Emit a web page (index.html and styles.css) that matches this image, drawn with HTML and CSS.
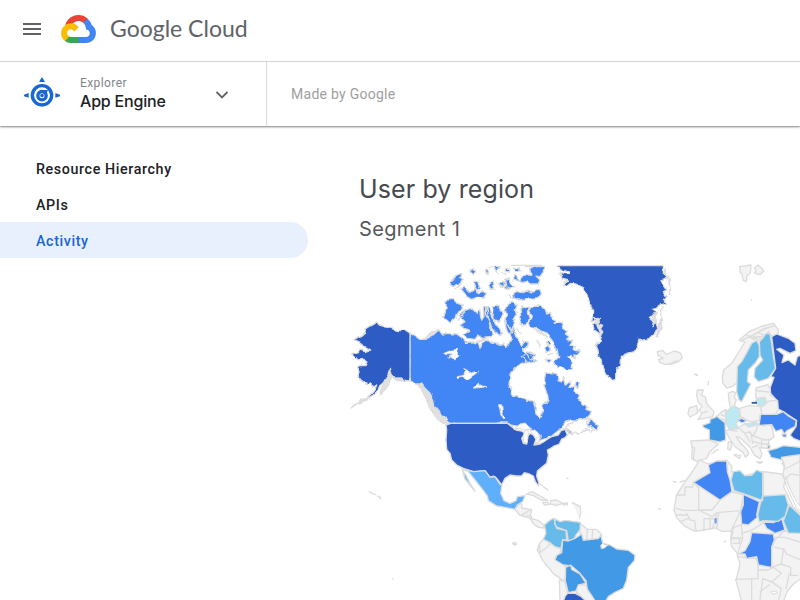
FILE: index.html
```html
<!DOCTYPE html>
<html lang="en">
<head>
<meta charset="utf-8">
<title>Google Cloud</title>
<link rel="stylesheet" href="styles.css">
</head>
<body>
<header class="topbar">
  <svg class="menu" viewBox="0 0 18 12"><path d="M0 1h18M0 6h18M0 11h18"/></svg>
  <svg class="logo" viewBox="0 0 256 206">
    <path fill="#ea4335" d="M170.252 56.819l22.253-22.253 1.483-9.37C153.437-11.677 88.976-7.496 52.42 33.92 42.267 45.423 34.734 59.764 30.717 74.573l7.97-1.123 44.505-7.34 3.436-3.513c19.797-21.742 53.27-24.667 76.128-6.168l7.496.39z"/>
    <path fill="#4285f4" d="M224.205 73.918a100.249 100.249 0 0 0-30.217-48.722l-31.232 31.232a55.515 55.515 0 0 1 20.379 44.037v5.544c15.35 0 27.797 12.445 27.797 27.796 0 15.352-12.446 27.485-27.797 27.485h-55.671l-5.466 5.934v33.34l5.466 5.231h55.67c39.93.311 72.553-31.494 72.864-71.424a72.303 72.303 0 0 0-31.793-60.453"/>
    <path fill="#34a853" d="M71.87 205.796h55.593V161.29H71.87a27.275 27.275 0 0 1-11.4-2.498l-7.887 2.42-22.409 22.253-1.952 7.574c12.567 9.489 27.9 14.825 43.647 14.757"/>
    <path fill="#fbbc05" d="M71.87 61.425C31.94 61.664-.237 94.228.002 134.158a72.301 72.301 0 0 0 28.222 56.88l32.248-32.246c-13.99-6.322-20.208-22.786-13.887-36.776 6.32-13.99 22.786-20.208 36.775-13.888a27.796 27.796 0 0 1 13.887 13.888l32.248-32.248A72.224 72.224 0 0 0 71.87 61.425"/>
  </svg>
  <span class="brand">Google Cloud</span>
</header>
<div class="subbar">
  <div class="product">
    <svg class="engine" viewBox="0 0 108 90">
      <circle cx="54" cy="55" r="29" class="ring"/>
      <circle cx="54" cy="56" r="12.500" class="ring inner"/>
      <path d="M56 39h16l-4 9-9 4zM54 50a5.500 5.500 0 1 0 0 11 5.500 5.500 0 0 0 0-11zM46 13l8-13 8 13v2H46zM14 48v14L0 58v-5zM94 48v14l14-4v-5z"/>
    </svg>
    <div class="names"><span class="kind">Explorer</span><span class="name">App Engine</span></div>
    <svg class="chevron" viewBox="0 0 12 8"><path d="M.5 1L6 6.500 11.500 1"/></svg>
  </div>
  <span class="made">Made by Google</span>
</div>
<div class="body">
  <nav class="side">
    <a>Resource Hierarchy</a>
    <a>APIs</a>
    <a class="active">Activity</a>
  </nav>
  <main class="main">
    <h1>User by region</h1>
    <h2>Segment 1</h2>
    <svg class="map" viewBox="0 0 1380 1020">
      <defs>
        <filter id="jagged" filterUnits="userSpaceOnUse" x="0" y="0" width="1050" height="600" color-interpolation-filters="sRGB">
          <feTurbulence type="fractalNoise" baseFrequency="0.055" numOctaves="1" seed="4"/>
          <feDisplacementMap in="SourceGraphic" scale="15" xChannelSelector="R" yChannelSelector="G"/>
        </filter>
        <clipPath id="north"><path d="M0 17h1380v1003H0z"/></clipPath>
      </defs>
      <g clip-path="url(#north)">
      <g filter="url(#jagged)">
        <!-- Alaska and its islands -->
        <path class="coast" d="M228 366L245 370 262 382 280 402 290 430 308 458 334 484 332 500 322 500 292 476 286 462 268 446 262 422 248 396zM152 325l4 28-10 18-8 18-20 18 8-25zM34 444l18-18 24-12 14-4-12 12-24 8zM162 350l12-8 14 16 22 4-20 2-24-6z"/>
        <path class="c1" d="M110 186l8 9 14 4 13 4 20 6 15 3 15-2 14 8v144h-12l-12-2-10-10-7-3-8 8-4-10-4-20-5 15-9 15-8 13-8 7-7 15-15 15-12 7-8 2 15-14 10-12 5-13-12 3-10-8-8 7-4-12-8 1-8-11-6-5 4-20-6-8 8-6 18 1 6-11-12-8-17 2-17-16 17-6 5-8 15 5 17-5-12-8-10-2-8-12-16-8 6-8 14-6 12-11-3-8 15-9z"/>
        <!-- Canada -->
        <path class="c2" d="M211 220L225 228 240 238 252 240 262 230 280 222 297 210 305 222 320 220 350 222 365 232 372 246 400 246 415 248 420 265 426 248 440 240 450 248 470 252 490 252 500 262 508 250 515 235 508 218 496 195 498 180 515 185 520 210 530 225 535 240 545 262 552 240 565 250 562 262 548 270 560 276 584 284 578 296 590 306 570 308 545 310 525 325 510 345 507 375 513 390 520 405 540 410 560 420 578 423 585 440 588 465 598 475 605 465 608 440 620 425 625 415 617 390 612 375 615 350 617 338 640 342 652 345 654 362 664 366 668 350 676 376 690 364 688 384 700 378 702 396 716 404 712 414 728 424 726 434 742 440 738 448 754 454 750 464 740 475 720 480 690 480 675 488 665 500 655 512 635 528 615 538 587 552 600 540 600 525 585 518 570 508 560 495 535 500 515 495 502 489 330 489 300 460 285 440 280 420 270 400 255 385 245 372 225 372 211 362z"/>
        <path class="c2" d="M738 496L748 488 752 474 762 486 772 494 768 508 754 500zM682 498L694 494 702 508 698 520 686 524z"/>
        <path class="c2" d="M318 120l22-2 10 10 20 7-5 15-15 10-5 15-15 15-10-10-10-5 8-25zM355 165l25-15 15-5 15 15 8-10 7 30 7-10-2-30 10 0 5 30 5 30 10 20-10 12-20 3-15-10-10 13-25-3-10-10 20-15-20-5-10-10 15-10zM438 140l10-1 2 18 12 26 14 20 12 16-8 8-14-12-12-14-8-20-10-20z"/>
        <path class="c2" d="M461 140l12-2 6 14 12 3-6 18-8 12-12-6-8-18zM500 132l14-4 18 6-6 16 4 18-10 18-6 20 4 12-14 2-6-16-4-22 6-16-4-16z"/>
        <path class="c2" d="M540 150L550 138 568 142 562 158 568 176 560 194 548 200 538 188 542 168z"/>
        <path class="c2" d="M572 140L602 138 614 148 620 162 632 158 634 174 648 180 646 190 668 190 664 202 682 214 676 222 688 230 680 238 698 244 690 256 706 260 702 270 718 274 712 284 704 282 706 296 692 286 684 290 698 308 696 330 678 328 660 318 650 324 642 304 656 292 652 272 646 254 632 236 618 218 600 212 588 206 574 204 568 186 576 172 566 156z"/>
        <path class="c2" d="M544 288l14-8 14 16 12 4-10 8-16-2zM614 264l10-4 8 10-12 8zM620 246l8-3 3 12-8 4zM614 300l8-6 10 4-8 8zM708 366l10 2-4 14-8-2z"/>
        <path class="c2" d="M330 74l10-18 12-12 14-4-4 14 8 4-8 12-14 4-8 6zM389 32l14-6 4 10-10 8zM362 86l12-4 12 14 14-4 10-8 4 14 12-4 14 6-10 14-16-2-20 6-14-8-6-10zM404 62l10 8 8 18-10 2-8-14zM436 30l6-3 4 14-6 1zM446 72l14-6 4 18-12 4zM468 18l10 2-4 10-8-4zM480 68l10-4 4 10-10 6zM494 58l14-4 3 16 12 8-12 10-14-6zM496 22l14 4-2 10-12-2zM520 46l14 6 2 10-14-4zM524 24l16-2 2 10-14 2zM544 52l14-8 18-4-8-12 10-8h34l-2 16-10 14-12-2 12 12-6 12-20 0-14-6-10 4-12-8zM530 94l14 4 16-8 20 6 20-8 4 14-10 14-20 2-20-2-18 4-14-6-2-14z"/>
        <path class="coast" d="M446 22h16M552 20h38M466 24l6 20M486 38l12 8M450 78l16 14M470 66l22 14M504 102l16 14M346 86l16-12M352 180l24-26M376 250l38-2 22-12M446 244l30 6M250 236l24-20 20-6-20 20-22 8M530 205l12 16M500 190l14 24M580 210l20 4 20 18M590 240l12 20M626 284l12-4"/>
        <path class="lake" d="M312 280l24-10 20-2-4 12 8 4-16 16-10-2-8-6 10-8-16 0zM352 351l18-5 6-14-8-6 18 6 2 10 14-6 14-2-6 8-14 6-14 10-10-1-4-6-14 5zM400 384l16-15 6 9 18 1-20 4zM477 434l8 0 2 20 9 20-5 3-8-14-6-20z"/>
        <!-- Greenland -->
        <path class="c1" d="M648 10h322l0 30 13 10-10 10-10 2 17 28-10 5 11 15-8 10 3 10-18 5-5 10-20 3 15 10-5 12-15 5 20 10 10 20-10 10-20 20-25 7-7-4-3 17-10 20-20 5-15 12-7 8-1 20-10 10 0 25-7 7-10-12-15-5-10-20-5-25-7-10-3-25-7-15 14-5 5-20-22-15-5-15 20-10-5-7-17 7 2-35-12-30-10-30-28-18-15-2-20 8 0-13 15-5-20-5-10-17 30 4 0-7-30-5z"/>
        <path class="coast" d="M760 172l18 6-6 12 16 6-8 12 8 10-4 12M976 26l-2 20 14 12 4 48M966 142l-4 20 4 44-18 22M942 160l8 20-14 20"/>
        <path class="edge" d="M669 520L683 496 700 484 734 478 752 474 740 488 744 500 766 508 758 514 738 506 712 524 704 516 692 524 686 504 668 504z"/>
      </g>
      </g>
      <!-- straight borders -->
      <path class="c2 patch" d="M211 240h50v114h-50zM345 462h125v28H345z"/>
      <path class="c1 patch" d="M165 222h45v130h-45z"/>
      <path class="line" d="M210 220v142M330 490h172M656 17h312"/>
      <path class="coast" d="M514 16h90"/>
      <path class="land" d="M952 275l15-4 12 12 24-10 18 6 6 14-12 12-23 9-16-6-16 0-4-9 14-5-16-8z"/>
      <path class="land" d="M1199 20l34-5-2 24-11 9-1 17-9-4-4-18-6-8zM1244 24l10-9 12 10 5 9-12 10-15-5 4-7z"/>
      <!-- United States and Mexico -->
      <path class="c1" d="M332 490H502l13 10 13 10 17 3 10 7-10 15 5 15 10 2 2-22 8-10 10 5 8 13-6 17 18-3 18-12 17-10 20-5 8-13 12-4 7 17-7 8-10 4-7 15-16 6-10 7-10 5 3 15-5 25-15 12-13 11-2 15 7 22-2 7-9-12-6-17-12-6-15-4-8 10-15 0-20-3-15 10-10 20-15-20-10-7-10 4-15-20-20 3-15 0-30-10-20-10-15-15-5-20-10-12-2-28 2-30-2-15z"/>
      <path class="lake" d="M522 508l18-16 16-3 8 10 10 8-20 3-16-5zM555 512l10-2-1 22-3 18-10-3 0-20zM572 512l12-2 10 8 5 12-12 4-6-8zM587 550l22-12 18-5-14 12-18 6z"/>
      <path class="c4" d="M367 627l33 8 20-2 15-1 15 20 15-2 15 23 6 2-4 25 10 22 18 8 18-8 4-12 23-3-7 18-16 10-7 13-15-3-15-3-25-4-25-16-3-14-17-23-20-25-20-25-7-3zM367 630l11 16 10 20 17 28-10-12-20-25z"/>
      <!-- Central America, Caribbean, South America -->
      <g transform="translate(480 660)">
        <path class="land" d="M45 88l8-10 8-8 5 2-1 12 30 5-4 17 5 10 20 6 17 14-2 8-14-2-14-8-14-20-30-9zM78 42l18-7 24 13 24 14-22-2-22-14zM128 67l15 0 4 6-14 2zM152 62l18-2 19 10-18 6-20-4zM190 70l12-1v5l-12 1zM117 12l10 4M130 20l14 10M217 68l24 12 1 20-4 14M38 190l8-3 3 6-7 2z"/>
        <path class="land" d="M112 210l6-20 14-12 18 10 18 14 15 4-3 16-14 13 25 20 7 7-3 43-35-24-30-37zM118 190l14-12 18 8-4 12-26 20zM178 300l17 4 8 36-10 24h-13zM240 130l22 18 28 0 15 16-10 13-43 4-12-18zM262 150l-2 28M278 150l-2 26M234 314l26 2 4 18 26 12v16h-35l-26-26zM90 90l-22 14M94 110l-12-5"/>
        <path class="c5" d="M133 135l15-13 14-8 3 16 5 15 28 7 2 28-12 0-5 25-18-5-15-12-20-10 8-18zM166 117l14 8 16-4 45 6-1 23-12 15-6 13-17 5-5-31-28-10-8-10z"/>
        <path class="c3" d="M188 180L205 183 225 175 245 162 250 181 275 178 295 176 303 166 308 190 330 195 350 207 385 211 405 226 403 242 385 262 380 300 370 325 345 337 325 350 318 362 285 362 262 327 258 302 240 280 215 258 190 255 165 240 170 226 185 218zM197 262L212 255 215 268 240 282 258 310 235 315 228 333 205 338 196 303z"/>
        <path class="c1" d="M190 363l6-16 8-8 22 1 18 10 14 13z"/>
        <path class="lake" d="M303 195l8-7 2 7 10 0-8 8-10 3z"/>
      </g>
      <!-- Europe -->
      <g transform="translate(960 0)">
        <path class="land" d="M187 350l4-20 24-20 25-40 15-24-18-5 30-26 40-17 34-8 14 20v15l-18 5-12-15-15 20-15 5-20 10-13 30-22 35-6 50-18 15-16 4-12-16z"/>
        <path class="coast" d="M242 242l36-16 34-20 30-8M262 226l18 12 28-10M292 218l20 6"/>
        <path class="c5" d="M290 241l8 17v32l-13 20-20 20-3 35 10 7-14 28-13 25-8-5-7-25 2-75 13-15 17-30 13-25zM308 235l10-15 12 2 5 28 5 40 7 35-22 30-30 10-13-15 3-25 23-25-8-15-2-40z"/>
        <path class="c1" d="M335 230L350 222 385 235 405 250 408 272 390 280 360 265 350 268 372 285 366 308 385 300 405 315 412 290 425 285V545L400 535 390 525 408 500 410 482 385 465 370 455 350 445 345 415 332 400 330 385 342 352 332 350 347 325z"/>
      </g>
      <g transform="translate(960 300)">
        <path class="land" d="M288 84l35-10 8 12 0 18 22 18 2 26-10 17-45 0-2 17-28 3-28-15-5-24 32-10 28 4 8-16-18-12zM205 100l12-6 10 4-4 14 6 8-8 22-10 0-4-20zM112 90l18 0-6 16 12 4 4 20 22 25-4 15-44 9 12-20-10-8 10-12-12-14-4-20zM88 144l22-7 3 22-23 12-6-10zM92 243l56-3 27 12-25 23-10 20-30 9-15-9 2-33zM168 174l14-16 16-10 2 34z"/>
        <path class="land" d="M196 212l38-8 22-14 34 2 30-6 14 10 8 34-16 12 0 24-28-4 8 20-6 14-16-10-14-24-22-22-14-10-6 0 16 22 18 18 4 12-10 10-6-14-24-18-16-22zM222 284l20 2-4 10zM205 246l8-1 2 14-5 12-7-4zM290 306l18 0-8 4zM155 280l10-4M164 272l12-4"/>
        <path class="border" d="M240 206l14 14 14-4 10 12 12-20 4-18M254 220l16 24M272 216l6 34M290 208l-10 20 34 12 20-2M278 244l28 8 22 0M278 262l16-6M305 240v24M290 190l24 8M210 210l20 4M305 162l-2-20 26-20 20 0M290 92l36 4M94 260l10 4-4 36M124 160l18-6M198 170l-14-6M206 150l14-10"/>
        <path class="c3" d="M128 196l22-8 0-10 16-6 3 -4 26 20 2 52-17 6-32-6 0-30-18-8zM322 258l8-2 0 8-8 2zM324 272l26-7 20-8 52 5v29l-37-2-20 11-32-8z"/>
        <path class="c6" d="M197 156l12-10 16-8 14 10 1 28-12 14 8 16-28 2-11-20zM290 116l24-4 5 12-10 14-12 0-10-10zM254 192l16-2 20-5-2 10-22 6z"/>
        <path class="c2" d="M302 163l48 0 20-8 15 13 24 14-4 18-24 12 -8 10-8-14-18 6-12-20-38 2zM232 180l14-5 14 8-14 6zM366 222l14 0-2 10-10-2z"/>
        <path class="tiny" d="M275 126l16-1v6h-16z"/>
        <path class="land" d="M0 6l15 8 12-2L50 2M104 42l6 4M145 64v10M366 310l12-18 42 0v24l-40 18z"/>
      </g>
      <!-- Africa -->
      <g transform="translate(960 570)">
        <path class="land" d="M118 30l27 12 55-12 16 20-2 14 40 14 48-14 64 8 9 20-4 18 28 60 26 24V384l-25 18-18 22-12 30H245l-17-62 12-50-10-34-15-18-3-24 3-22-28 0-22-10-60 10-30-15-25-26-8-24 8-45 25-38 28-40z"/>
        <path class="border" d="M100 97l-2 14H75v24H50M100 97l16 16 0 68H70L48 175M116 180l40 0 24-30M180 150l36-24 34 8-8 48-72 6-14 12-40-20M170 190l-12 46M132 206v36M150 204v34M132 206h38M104 212l4 30M80 190l10 20 14 2M50 195h28M60 215l26-10M176 190l-6 44M240 186l-14 30-14 28M246 224l-24 8-8 32h30M244 224l4 40-14 44M214 266h24v14h-18M245 250l28-8 38-24M310 68l0 70h66M375 240l-30 30-8 20M345 262h30l45 14M345 292l28 6 6 14 40 16M340 350l24-8 28 10 0 24 20 0M232 320l58 6 4 20 0 40-68 2M294 360l30 0 16-8 24 18-28 26-28-10M308 388l-8 60M275 390v60M336 396l28 20-8 34M372 240l16 8M364 340l6-40M388 370l-10 46M300 425l28-20"/>
        <path class="land" d="M364 22l56-8v152l-14-8-14-32-14-44-10-4 6-30z"/>
        <path class="border" d="M374 88l18-16 28 4M370 60l50-26"/>
        <path class="lake" d="M374 95l10 24 14 30 12 26 14 10v-12l-14-18-14-26-12-26z"/>
        <path class="c2" d="M145 45L170 33 200 33 202 65 210 90 216 125 180 150 100 97 150 68zM250 133L298 155 290 195 292 202 265 225 245 222 242 185 250 165zM310 216L340 218 365 206 375 240 345 250 320 235zM275 248L340 252 343 270 335 290 335 352 295 345 290 320 260 325 255 312 235 312 255 302 270 275z"/>
        <path class="c5" d="M220 65L240 62 255 77 275 76 290 60 308 68 308 152 250 131 222 122 213 90zM308 138L375 134 385 165 375 200 365 206 355 214 310 212 298 216 293 195 300 165zM388 165L424 199V250L385 249 370 213z"/>
        <path class="tiny pale" d="M163 206l7-2 0 16-5 1z"/>
        <path class="lake" d="M334 424l16 0 2 6-14 2z"/>
        <path class="coast" d="M40 94l8 2M60 96l14-4M-4 176l6 2M192 276l5-3"/>
      </g>
      <path class="coast" d="M88 696l6 2M94 700l12 4M112 708l10 4-2 4M680 656l4-2M1068 342l4 4M1234 120l1 1M158 956l1 1"/>
    </svg>
  </main>
</div>
</body>
</html>
```
FILE: styles.css
```css
* { box-sizing: border-box; }
html, body { margin: 0; height: 600px; overflow: hidden; background: #fff; }
body { font-family: Roboto, sans-serif; color: #202124; display: flex; flex-direction: column; }
svg { display: block; flex: none; }

.topbar { height: 62px; flex: none; display: flex; align-items: center; padding: 0 0 4px 23px; border-bottom: 1px solid #dadce0; }
.menu { width: 18px; height: 12px; stroke: #5f6368; stroke-width: 1.8; }
.logo { width: 35px; height: 28px; margin-left: 20px; }
.brand { margin: -2px 0 0 14px; font: 400 23px/30px Lato, sans-serif; letter-spacing: 0; color: #5f6368; white-space: nowrap; }

.subbar { height: 64px; flex: none; display: flex; align-items: stretch; box-shadow: 0 1px 2px rgba(0,0,0,.5); }
.product { width: 267px; display: flex; align-items: center; padding-left: 24px; border-right: 1px solid #dadce0; }
.engine { width: 36px; height: 30px; fill: #1967d2; margin-top: -4px; }
.ring { fill: none; stroke: #1967d2; stroke-width: 10; }
.inner { stroke-width: 10; }
.names { display: flex; flex-direction: column; margin: -2px 0 0 20px; width: 136px; }
.kind { font-size: 12px; line-height: 16px; letter-spacing: .4px; color: #80868b; }
.name { font: 500 16px/21px Inter, sans-serif; letter-spacing: -.2px; color: #202124; }
.chevron { width: 12px; height: 8px; fill: none; stroke: #5f6368; stroke-width: 1.9; margin-top: 2px; }
.made { align-self: center; margin: 0 0 0 24px; font-size: 14px; letter-spacing: .27px; color: #9e9e9e; }

.body { flex: 1; display: flex; min-height: 0; }
.side { width: 308px; flex: none; padding-top: 24px; }
.side a { display: flex; align-items: center; height: 36px; padding: 2px 0 0 36px; font-size: 14.300px; font-weight: 500; letter-spacing: .6px; border-radius: 0 18px 18px 0; }
.side .active { background: #e8f0fe; color: #1967d2; }

.main { flex: none; width: 492px; padding: 43px 0 0 32px; overflow: hidden; }
h1, h2 { margin: 0 0 0 19px; font-family: Inter, sans-serif; font-weight: 400; color: #454a4f; }
h1 { font-size: 25px; line-height: 40px; letter-spacing: .12px; }
h2 { font-size: 20px; line-height: 40px; letter-spacing: .35px; color: #55585c; }
.map { width: 460px; height: 340px; margin-top: 11px; stroke: #dcdcdc; stroke-width: 4; stroke-linejoin: round; stroke-linecap: round; }
.c1 { fill: #2d5dc4; }
.c2 { fill: #4285f4; }
.c3 { fill: #4299e6; }
.c4 { fill: #5eb0fc; }
.c5 { fill: #67bbeb; }
.c6 { fill: #bce9f2; }
.patch { stroke: none; }
.line { fill: none; }
.land { fill: #f3f3f3; }
.lake { fill: #fff; stroke-width: 3; }
.coast { fill: #e0e0e0; }
.border { fill: none; }
.edge { fill: #fff; }
.tiny { fill: #3557b8; stroke: none; }
.pale { fill: #6e9bf0; }
```
